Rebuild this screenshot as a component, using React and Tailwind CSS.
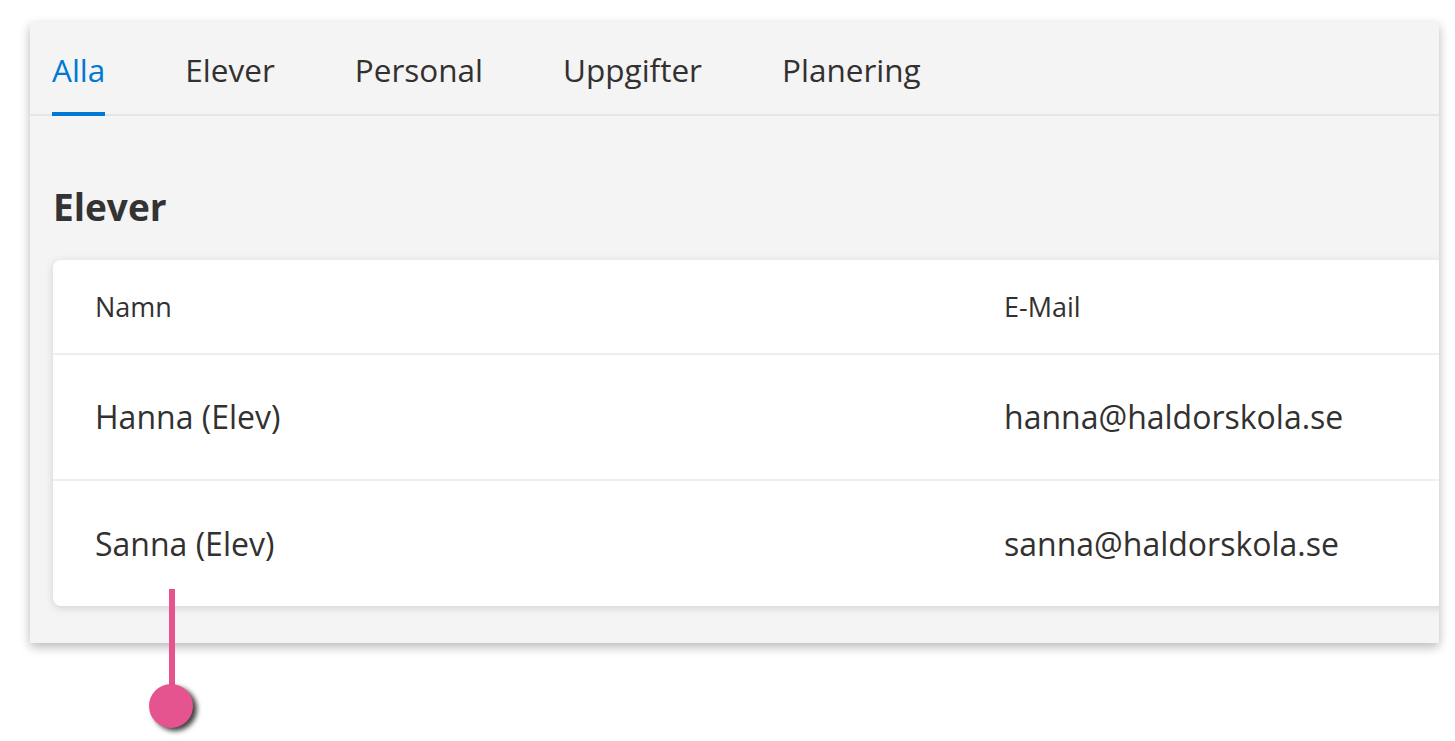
import React from 'react';

const tabs = ['Alla', 'Elever', 'Personal', 'Uppgifter', 'Planering'];

const students = [
  { name: 'Hanna (Elev)', email: 'hanna@haldorskola.se' },
  { name: 'Sanna (Elev)', email: 'sanna@haldorskola.se' },
];

const App = () => {
  return (
    <div
      className="relative w-[1455px] h-[741px] bg-white overflow-hidden"
      style={{ fontFamily: '"Open Sans", "Noto Sans", sans-serif' }}
    >
      {/* Panel */}
      <div className="ml-[30px] mt-[22px] w-[1409px] h-[621px] bg-[#f4f4f4] overflow-hidden shadow-[0_4px_10px_rgba(0,0,0,0.28)]">
        {/* Tabs */}
        <div className="flex gap-[80px] px-[22px] border-b-2 border-[#e1e6ec]">
          {tabs.map((tab, i) => (
            <div
              key={tab}
              className={`pt-[26px] pb-[20px] -mb-[2px] border-b-4 text-[31.5px] leading-[44px] ${
                i === 0 ? 'border-[#0078d4] text-[#0078d4]' : 'border-transparent text-[#323130]'
              }`}
            >
              {tab}
            </div>
          ))}
        </div>

        {/* Heading */}
        <h2 className="mt-[67px] ml-[23px] text-[37px] leading-[48px] font-bold text-[#333333]">Elever</h2>

        {/* Table card */}
        <div className="mt-[29px] ml-[23px] w-[1420px] bg-white rounded-lg shadow-[0_2px_8px_rgba(0,0,0,0.14)]">
          <div className="grid grid-cols-[951px_1fr] h-[95px] items-center border-b-2 border-[#eeeeee] text-[27px] text-[#323130]">
            <div className="pl-[42px] pt-[2px]">Namn</div>
            <div className="pt-[2px]">E-Mail</div>
          </div>
          {students.map((s, i) => (
            <div
              key={s.email}
              className={`grid grid-cols-[951px_1fr] items-center text-[32px] text-[#323130] ${
                i < students.length - 1 ? 'h-[126px] border-b-2 border-[#eeeeee]' : 'h-[125px]'
              }`}
            >
              <div className="pl-[42px]">{s.name}</div>
              <div>{s.email}</div>
            </div>
          ))}
        </div>
      </div>

      {/* Annotation marker */}
      <div className="absolute left-[169px] top-[589px] w-[6px] h-[100px] bg-[#e5548f]" />
      <div className="absolute left-[149px] top-[684px] w-[44px] h-[44px] rounded-full bg-[#e5548f] shadow-[4px_3px_5px_rgba(0,0,0,0.75)]" />
    </div>
  );
};

export default App;
